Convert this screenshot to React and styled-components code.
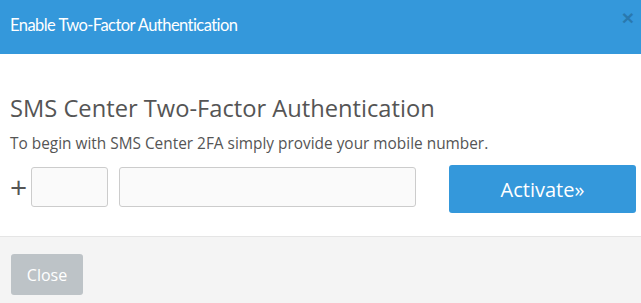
import React from "react";
import styled, { createGlobalStyle } from "styled-components";

const GlobalStyle = createGlobalStyle`
  html, body {
    margin: 0;
    padding: 0;
    background: #ffffff;
  }
  body {
    font-family: "Open Sans", "Liberation Sans", sans-serif;
    color: #555555;
  }
  * {
    box-sizing: border-box;
  }
`;

const Modal = styled.div`
  width: 641px;
  height: 303px;
  display: flex;
  flex-direction: column;
  background-color: #ffffff;
`;

const Header = styled.div`
  height: 54px;
  padding: 0 7px 5px 10px;
  background-color: #3498db;
  display: flex;
  justify-content: space-between;
  align-items: center;
`;

const HeaderTitle = styled.h4`
  margin: 0;
  font-family: Lato, "Open Sans", sans-serif;
  font-size: 16.5px;
  font-weight: 400;
  letter-spacing: -0.55px;
  color: #ffffff;
`;

const CloseX = styled.button`
  align-self: flex-start;
  margin-top: 7px;
  padding: 0;
  border: none;
  background: transparent;
  font-family: "Liberation Sans", sans-serif;
  font-size: 21px;
  font-weight: 700;
  line-height: 1;
  color: #000000;
  opacity: 0.2;
  cursor: pointer;
`;

const Body = styled.div`
  flex: 1;
  padding: 40px 5px 0 10px;
`;

const Heading = styled.h3`
  margin: 0;
  font-size: 23.7px;
  font-weight: 400;
  line-height: 1.2;
  color: #555555;
`;

const Lead = styled.p`
  margin: 11px 0 0;
  font-size: 15.4px;
  line-height: 1.4;
  color: #555555;
`;

const FormRow = styled.div`
  margin-top: 10px;
  display: flex;
  align-items: flex-start;
`;

const Plus = styled.span`
  width: 21px;
  margin-top: 2px;
  font-size: 30px;
  line-height: 40px;
  color: #555555;
`;

const Field = styled.input`
  width: ${(p) => p.$width}px;
  height: 40px;
  margin-top: 2px;
  margin-right: ${(p) => p.$gap || 0}px;
  padding: 6px 10px;
  border: 1px solid #cccccc;
  border-radius: 3px;
  background-color: #fafafa;
  font-family: inherit;
  font-size: 14px;
  color: #555555;
  outline: none;
`;

const PrimaryButton = styled.button`
  width: 187px;
  height: 48px;
  margin-left: auto;
  border: none;
  border-radius: 3px;
  background-color: #3498db;
  font-family: "Open Sans", sans-serif;
  font-size: 20px;
  color: #ffffff;
  cursor: pointer;
`;

const Footer = styled.div`
  height: 67px;
  padding: 17px 11px;
  border-top: 1px solid #e5e5e5;
  background-color: #f4f4f4;
  display: flex;
  align-items: flex-start;
`;

const GreyButton = styled.button`
  width: 72px;
  height: 41px;
  border: none;
  border-radius: 3px;
  background-color: #bdc3c7;
  font-family: "Open Sans", sans-serif;
  font-size: 16px;
  color: #ffffff;
  cursor: pointer;
`;

const App = () => {
  return (
    <>
      <GlobalStyle />
      <Modal>
        <Header>
          <HeaderTitle>Enable Two-Factor Authentication</HeaderTitle>
          <CloseX aria-label="Close">×</CloseX>
        </Header>

        <Body>
          <Heading>SMS Center Two-Factor Authentication</Heading>
          <Lead>To begin with SMS Center 2FA simply provide your mobile number.</Lead>
          <FormRow>
            <Plus>+</Plus>
            <Field $width={77} $gap={11} />
            <Field $width={297} />
            <PrimaryButton>Activate»</PrimaryButton>
          </FormRow>
        </Body>

        <Footer>
          <GreyButton>Close</GreyButton>
        </Footer>
      </Modal>
    </>
  );
};

export default App;
